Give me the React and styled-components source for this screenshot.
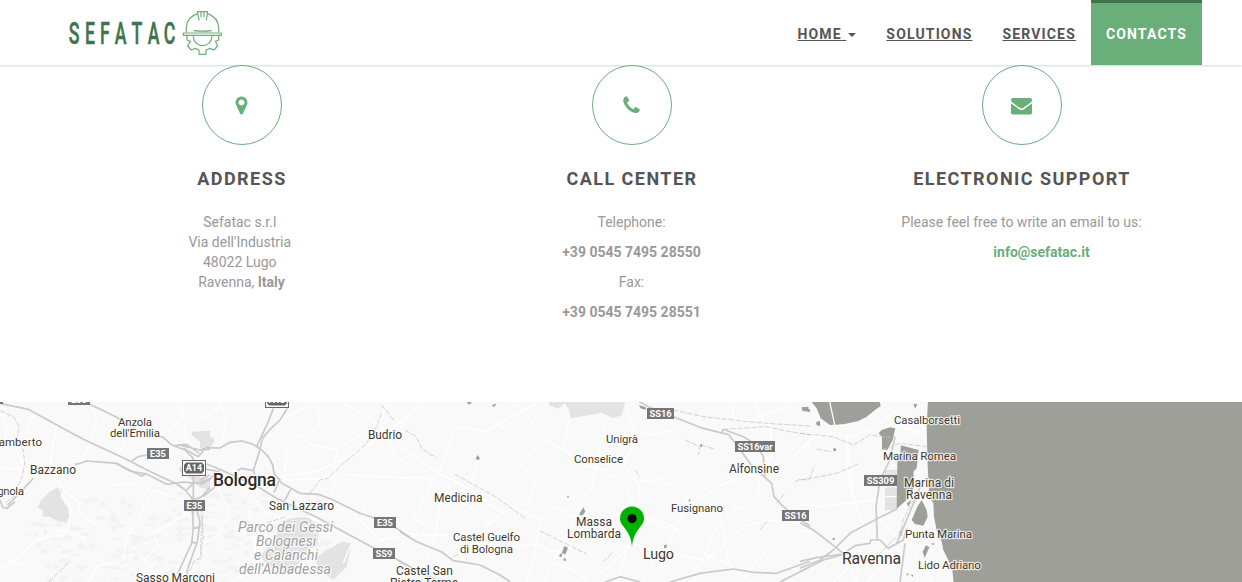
import React from 'react';
import styled, { createGlobalStyle } from 'styled-components';

const GREEN = '#6aae7a';
const DARK_GREEN = '#3f744e';

const GlobalStyle = createGlobalStyle`
  *, *::before, *::after { box-sizing: border-box; }
  body {
    margin: 0;
    background: #fff;
    color: #999;
    font: 14px/20px Roboto, "Liberation Sans", sans-serif;
    overflow: hidden;
  }
`;

const Page = styled.div`
  display: flex;
  flex-direction: column;
  height: 582px;
  overflow: hidden;
`;

const Header = styled.header`
  display: flex;
  justify-content: space-between;
  flex: none;
  height: 65px;
  padding: 0 40px 0 67px;
  background: #fff;
  box-shadow: 0 1px 2px rgba(0, 0, 0, 0.16);
`;

const Brand = styled.a`
  display: block;
  padding-top: 8px;
  svg { display: block; }
`;

const Nav = styled.nav`
  display: flex;
`;

const NavLink = styled.a`
  display: flex;
  align-items: center;
  height: 65px;
  padding: ${(p) => (p.$active ? '0 15px' : '3px 15px 0')};
  border-top: ${(p) => (p.$active ? `3px solid ${DARK_GREEN}` : '0')};
  background: ${(p) => (p.$active ? GREEN : 'transparent')};
  color: ${(p) => (p.$active ? '#fff' : '#555')};
  font-weight: 700;
  letter-spacing: 1.15px;
  text-decoration: ${(p) => (p.$active ? 'none' : 'underline')};
  white-space: pre;
`;

const Caret = styled.span`
  margin: 2px 0 0 2px;
  border: 4px solid transparent;
  border-top-color: #555;
  border-bottom: 0;
`;

const Contacts = styled.section`
  display: grid;
  grid-template-columns: repeat(3, 390px);
  flex: none;
  height: 337px;
  padding-left: 47px;
  text-align: center;
`;

const Card = styled.article`
  display: flex;
  flex-direction: column;
  align-items: center;
`;

const IconRing = styled.div`
  display: flex;
  align-items: center;
  justify-content: center;
  width: 80px;
  height: 80px;
  padding: 1px 1px 0 0;
  border: 1px solid ${GREEN};
  border-radius: 50%;
  background: #fff;
  z-index: 1;
`;

const Title = styled.h4`
  margin: 24px 0 23px;
  color: #555;
  font-size: 18px;
  line-height: 20px;
  font-weight: 700;
  letter-spacing: 1.45px;
`;

const Text = styled.p`
  margin: 0 0 10px;
  padding-right: 1px;
`;

const MailLine = styled.p`
  margin: 0;
  padding-left: 39px;
  color: ${GREEN};
  font-weight: 700;
`;

const MapPanel = styled.section`
  flex: none;
  height: 180px;
  overflow: hidden;
  background: #f9f9f9;
  svg { display: block; }
`;

const ICONS = {
  marker:
    'M1152 640q0-106-75-181t-181-75-181 75-75 181 75 181 181 75 181-75 75-181zm256 0q0 109-33 179l-364 774q-16 33-47.5 52t-67.5 19-67.5-19-46.5-52l-365-774q-33-70-33-179 0-212 150-362t362-150 362 150 150 362z',
  phone:
    'M1600 1240q0 27-10 70.5t-21 68.5q-21 50-122 106-94 51-186 51-27 0-53-3.5t-57.5-12.5-47-14.5-55.5-20.5-49-18q-98-35-175-83-127-79-264-216t-216-264q-48-77-83-175-3-9-18-49t-20.5-55.5-14.5-47-12.5-57.5-3.5-53q0-92 51-186 56-101 106-122 25-11 68.5-21t70.5-10q14 0 21 3 18 6 53 76 11 19 30 54t35 63.5 31 53.5q3 4 17.5 25t21.5 35.5 7 28.5q0 20-28.5 50t-62 55-62 53-28.5 46q0 9 5 22.5t8.5 20.5 14 24 11.5 19q76 137 174 235t235 174q2 1 19 11.5t24 14 20.5 8.5 22.5 5q18 0 46-28.5t53-62 55-62 50-28.5q14 0 28.5 7t35.5 21.5 25 17.5q25 15 53.5 31t63.5 35 54 30q70 35 76 53 3 7 3 21z',
  envelope:
    'M1792 710v794q0 66-47 113t-113 47h-1472q-66 0-113-47t-47-113v-794q44 49 101 87 362 246 497 345 57 42 92.5 65.5t94.5 48 110 24.5h2q51 0 110-24.5t94.5-48 92.5-65.5q170-123 498-345 57-39 100-87zm0-294q0 79-49 151t-122 123q-376 261-468 325-10 7-42.5 31t-54 38-52 29.5-57.5 22.5-50 7.5h-2q-23 0-50-7.5t-57.5-22.5-52-29.5-54-38-42.5-31q-91-64-262-182.5t-205-142.5q-62-42-117-115.5t-55-136.5q0-78 41.5-130t118.5-52h1472q65 0 112.5 47t47.5 113z',
};

function Icon({ name }) {
  return (
    <svg width="21" height="21" viewBox="0 0 1792 1792" fill={GREEN}>
      <path d={ICONS[name]} />
    </svg>
  );
}

function Logo() {
  return (
    <svg width="158" height="50" viewBox="67 8 158 50">
      <g transform="scale(.58 1)">
        <text
          y="44"
          x="127.600 155.200 181 207.800 236.200 264.700 292.200"
          textAnchor="middle"
          fontFamily="Roboto, sans-serif"
          fontSize="30.5"
          fontWeight="500"
          fill={DARK_GREEN}
          stroke={DARK_GREEN}
          strokeWidth=".5"
        >
          SEFATAC
        </text>
      </g>
      <g transform="translate(50 0) scale(.33333)" fill="none" stroke={GREEN} strokeWidth="3.6" strokeLinejoin="round" strokeLinecap="round">
        <path d="M409 95V82C410 62 424 47 443 41M473 41C492 48 505 62 506 82V95M447 60L442 35H473L469 60M453 35V50M462 35V50" />
        <path d="M432 92Q458 95 484 92" />
        <path d="M400 99H514V106H400Z" />
        <path d="M430 110C432 146 483 146 486 110" />
        <path d="M411 109V120L421 124L413 138L424 150L436 145L447 150V163H468V150L480 145L492 150L503 138L496 124L506 120V109" />
      </g>
    </svg>
  );
}

/* Map geometry is stored per tile, three units to a pixel. */
const TILES = [
  {
    x: 0,
    parks: [
      'M112 322L125 300L148 276L180 258L188 270L180 290L204 324L207 350L198 369L170 362L150 350L130 350L128 330Z',
      'M575 95L630 92V150L612 140L600 125L575 105Z',
      'M536 205L560 190L600 230L630 235V270L600 262L570 235L540 215Z',
    ],
    minor: [
      'M0 40L20 80L15 130L45 150L70 190', 'M100 45L75 100L30 140L0 145', 'M170 75L150 190L165 200', 'M270 8L290 60L265 140L240 190',
      'M380 120L345 180M440 120L500 95L550 50L545 8', 'M0 205L95 208M0 500L60 470L110 420L205 400L215 330L180 270L165 200',
      'M0 510L40 485L60 495L75 480', 'M265 546L290 500L370 480L380 410L430 330L425 290L460 250', 'M100 420L130 415L170 390L210 395',
      'M205 395L250 410L260 440M430 320L460 270L545 300', 'M415 546L440 470L475 440L460 400L560 340', 'M180 260L240 310L235 340L300 380',
      'M530 8L555 70L560 140', 'M440 200L400 250L330 255',
    ],
    trunk: [
      'M0 10L85 28L180 80L250 118L390 183L435 207L530 252L556 270L580 300', 'M268 12L350 52L420 95', 'M420 95L490 112L515 135L555 150L580 175V300L578 345',
      'M22 317L100 235M0 300L8 322L22 325L45 305', 'M225 193L240 190L260 183L350 190L390 213L440 222L500 253L550 246L590 250L630 238',
      'M350 192L425 228L437 222', 'M395 183L415 170L440 165', 'M520 137L560 133L598 160M545 137L600 150L630 148M550 145L595 170L612 150', 'M560 270L580 250',
      'M575 290L580 385L575 430L545 495L533 522', 'M590 330L600 365L592 425L565 500L560 520', 'M630 262L605 290L580 300M580 385L598 382M573 425L590 430',
    ],
    rail: ['M0 32L40 50L58 80L50 120L70 150L74 190L68 225L40 290L15 310', 'M148 545L210 483', 'M607 350L602 440L605 475L585 480L560 530'],
  },
  {
    x: 200,
    parks: ['M0 95L20 102L45 120L35 138L0 145Z', 'M255 360L320 345L358 385L350 440L320 450L280 520L210 500L180 470L220 420Z', 'M350 470L400 440L425 425L455 430L440 500L400 540L350 500Z'],
    minor: [
      'M60 8L80 60L65 130', 'M0 60L60 20L75 8', 'M240 60L320 20L330 8', 'M300 110L360 75L350 15', 'M200 95L260 150L255 240L400 235L410 150L500 90L545 60L560 8',
      'M225 230L350 215L480 150L560 100L630 40', 'M400 220L540 230L630 235', 'M430 8L560 90L580 160L630 200', 'M410 150L340 135L260 90', 'M390 290L420 220',
      'M150 270L185 330L240 350L330 350L400 390', 'M110 540L170 490L160 400L145 330', 'M50 260L90 330L60 400L30 420L0 440', 'M240 350L200 400L215 440', 'M430 490L450 440L480 410',
      'M480 300L500 350M460 340L540 420L590 410', 'M620 420L560 460',
    ],
    trunk: [
      'M0 150L20 143L60 144L90 127L125 123L160 133L185 150L205 170L218 195L222 220L245 250L300 280L355 283L400 300L480 340L525 355L590 385L630 412',
      'M220 25L205 65L170 140M262 25L240 60L210 88L188 115L178 155L160 212', 'M20 192L60 208L110 232L170 258L230 295L350 352L520 443L590 478L630 500',
      'M112 212L125 205L160 212L165 225M222 278L240 235M255 300L272 268', 'M0 255L30 238L50 215M10 290L40 265L70 240', 'M0 205L60 215', 'M0 240L30 225',
    ],
    rail: ['M545 40L530 80L500 130L455 170L425 195L385 235L360 240L330 280', 'M545 15L580 60', 'M3 300L10 410L0 470', 'M255 350L200 370'],
  },
  {
    x: 400,
    parks: ['M445 5H630V50L605 38L570 45L512 55L508 30L495 10L475 26L450 18Z'],
    minor: [
      'M0 70L25 60L60 8', 'M0 140L60 180L115 220L180 250L310 340L345 320L420 360L465 320L520 350', 'M100 235L0 232M115 220L165 90L180 80L260 95L300 70L390 20L410 8',
      'M300 70L318 100L240 170L210 250', 'M350 10L440 125L490 150L560 200L630 210', 'M440 125L355 190L410 230L385 310L345 325', 'M510 50L490 150M615 75L585 210L575 260L540 310L510 380L460 490L430 546',
      'M270 370L300 345M150 250L120 320L110 380L95 450L70 500', 'M100 235L55 330L40 355L75 375L70 405L130 405L180 430', 'M0 395L60 408M150 280L270 370L240 400', 'M330 440L410 435L460 455L520 440', 'M460 490L520 510L560 546M420 365L410 435L380 546',
    ],
    trunk: ['M0 395L50 425L125 456L160 482L240 495L300 525L330 545', 'M0 485L70 520L120 546'],
    rail: ['M15 90L48 110L65 145L110 175', 'M165 223L290 292L340 330L378 356', 'M420 393L500 432L560 462', 'M160 470L175 463'],
    buildings: ['M202 5H216L210 13H203Z', 'M275 16L290 10L282 22Z', 'M227 177L232 165L238 172V181Z', 'M537 343L550 322L556 335L546 347Z', 'M485 460L493 438L504 443L497 462Z', 'M477 467L482 460L488 466L482 472Z', 'M490 476L496 474L499 482H491Z', 'M502 288H506V293H502Z'],
  },
  {
    x: 600,
    parks: ['M0 5H75L65 45L40 55L0 35Z'],
    minor: [
      'M80 20L100 95L160 105L220 90M100 95V140L70 190L120 260L115 310L100 390L70 480L55 546', 'M0 210L65 240L100 310', 'M120 240L155 245L165 230L230 265L265 300L310 290L355 260L400 240L450 225L490 230',
      'M470 8L475 45L510 80L520 160L490 230', 'M265 305L220 400L150 500L130 546', 'M115 340L190 380L240 400L310 460L380 490L450 546', 'M310 470L340 400L400 330L470 300L480 230',
      'M490 235L550 200L600 150L630 130', 'M0 520L60 470L100 430L190 455L310 480L250 546', 'M390 500L360 350M320 480L430 380L500 360L590 370', 'M190 455L215 405', 'M150 350L250 395L310 440',
      'M395 15L405 60L460 60L510 40L560 20', 'M435 525L500 450',
    ],
    trunk: ['M118 5L145 20L220 50L300 82L360 98L385 103L410 135L450 190L492 230L515 250L522 290L545 315L580 345L630 378', 'M365 98L370 88L430 110L470 135L490 170L495 230', 'M210 546L300 520L400 507L460 517L530 520L630 484', 'M540 546L630 500', 'M15 546L60 530L120 546'],
    rail: ['M220 30L310 50L400 60L500 70L630 78', 'M370 88L500 80L570 95L630 105', 'M105 210L120 230M255 120L300 140L295 165M305 135L345 148', 'M585 245L600 238L630 240', 'M10 485L40 455M200 430L190 450M480 390L500 365M530 310L555 280'],
    buildings: ['M606 22L630 28V36L608 33Z', 'M301 132H306V140H301Z', 'M192 436L200 434V444H192Z', 'M117 15L137 22V30L122 25Z', 'M266 298H271V304H266Z'],
  },
  {
    x: 800,
    parks: ['M255 210H295V330H255Z'],
    minor: [
      'M0 150L40 110L100 100L150 110L210 90L290 30', 'M140 100V180L150 260L175 340L210 410', 'M140 110L150 200L160 300', 'M0 310L60 320L230 300', 'M100 546L150 500L165 546', 'M0 390L50 400L120 450',
      'M200 546L240 500L300 480M300 70L370 110M290 80L360 95', 'M255 230H295M255 260H290M255 290H290', 'M330 430L350 480L400 546', 'M180 450L170 546M60 8L90 75L130 75', 'M235 360L280 400L300 460',
    ],
    trunk: ['M0 368L40 390L108 442L135 465', 'M285 110L270 180L240 240L228 320L232 420', 'M0 484L50 473L130 462L165 437L210 430L212 420L240 420L265 445L310 420L320 385', 'M0 505L60 480L100 450L150 400L220 362L290 327', 'M290 430L345 300L365 250', 'M0 515L70 480L135 462', 'M315 430L300 546'],
    rail: ['M0 100L100 110L160 135L210 105L270 112', 'M245 150L300 130L380 140', 'M360 260L310 360L300 400L230 470', 'M40 205L30 235M0 240L30 235L110 220L180 190M50 148L95 155'],
    water: [
      'M384 0H1330V550H461L457 510L445 480L430 450L425 425L410 390L402 350L400 310L388 290L383 200L380 80Z',
      'M30 0H238L242 18L225 30L200 50L175 63L130 73L90 75L62 55L50 25Z',
      'M236 100L245 90L270 82L286 85L278 120L262 150L246 148V110Z', 'M302 136L356 150L350 205L340 215L343 260L320 300L290 326L292 180L302 170Z',
      'M365 300L380 330L383 350L370 377L345 372L335 360L352 320Z', 'M297 395L308 390L305 408Z',
    ],
    buildings: ['M5 22L25 20V32H8Z', 'M340 13L352 12L346 26Z', 'M368 455L378 436L388 442L374 474Z', 'M395 430H403V434H395Z', 'M98 414H104V420H98Z', 'M318 522L325 520V527ZM332 523L340 525L338 531Z', 'M100 145H108V153H100Z', 'M48 67L60 62V78L50 76Z', 'M320 310L335 300L325 320Z'],
    causeway: ['M88 0L104 75'],
  },
];

/* x, baseline y, width, size, text, variant */
const LABELS = [
  [118, 426, 34, 11.5, 'Anzola'], [110, 437, 50, 11.5, "dell'Emilia"], [-4, 446, 46, 11.5, 'lamberto'], [30, 474, 46, 12, 'Bazzano'],
  [-12, 495, 36, 11.5, 'Vignola'], [136, 582, 79, 12, 'Sasso Marconi'], [213, 486, 63, 17.5, 'Bologna', 'city'], [269, 510, 65, 12, 'San Lazzaro'],
  [368, 439, 34, 12, 'Budrio'], [434, 502, 48.5, 12, 'Medicina'], [453, 541, 67, 11.5, 'Castel Guelfo'], [460, 553, 53, 11.5, 'di Bologna'],
  [396, 575, 57, 12, 'Castel San'], [390, 587, 68, 12, 'Pietro Terme'], [574, 463, 49, 11.5, 'Conselice'], [606, 443, 32, 11.5, 'Unigrà'],
  [576, 526, 36, 12, 'Massa'], [567, 538, 54, 12, 'Lombarda'], [643, 559, 31, 14.3, 'Lugo'], [671, 512, 52, 11.5, 'Fusignano'],
  [729, 473, 50, 12, 'Alfonsine'], [894, 424, 66, 11.5, 'Casalborsetti'], [883, 460, 73, 11.7, 'Marina Romea'], [904, 487, 50, 12, 'Marina di'],
  [906, 499, 46, 12, 'Ravenna'], [905, 538, 67, 11.7, 'Punta Marina'], [918, 569, 63, 11.7, 'Lido Adriano'], [842, 564, 59, 15.8, 'Ravenna', 'big'],
  [238, 532, 95, 14, 'Parco dei Gessi', 'park'], [256, 546, 60, 14, 'Bolognesi', 'park'], [254, 560, 64, 14, 'e Calanchi', 'park'], [239, 574, 92, 14, "dell'Abbadessa", 'park'],
];

const SHIELDS = [
  [147, 448, 22, 'E35'], [184, 500, 21, 'E35'], [374, 517, 22, 'E35'], [373, 548, 22, 'SS9'], [647, 408, 27, 'SS16'],
  [735, 441, 40, 'SS16var'], [782, 510, 27, 'SS16'], [864, 475, 33, 'SS309'], [68, 394, 22, 'E35'], [-15, 393, 18, 'A1'],
];

function terrain() {
  const shapes = [];
  let seed = 11;
  const next = () => {
    seed = (seed * 16807) % 2147483647;
    return seed / 2147483647;
  };
  for (let i = 0; i < 230; i += 1) {
    const x = 25 + next() * 300;
    const y = 493 + next() * 92;
    if (y < 515 && x < 75) continue;
    const w = 3 + next() * 10;
    const h = 0.8 + next() * 2.4;
    shapes.push(`M${x} ${y}l${w * 0.5} ${-h}l${w * 0.3} ${h * 0.8}l${w * 0.4} ${h * 0.4}l${-w * 0.6} ${h}l${-w * 0.5} ${-h * 0.3}z`);
  }
  return shapes.join('');
}

const TERRAIN = terrain();

const LABEL_STYLES = {
  town: { fill: '#3d382b', weight: 400 },
  big: { fill: '#3d382b', weight: 400 },
  city: { fill: '#2f2a1d', weight: 500 },
  park: { fill: '#a0a0a0', weight: 400, italic: true },
};

function MapLabel({ item: [x, y, width, size, text, kind = 'town'] }) {
  const look = LABEL_STYLES[kind];
  return (
    <text
      x={x}
      y={y}
      textLength={width}
      fontSize={size}
      fontWeight={look.weight}
      fontStyle={look.italic ? 'italic' : 'normal'}
      fill={look.fill}
      stroke="#fff"
      strokeOpacity=".75"
      strokeWidth="2.4"
      strokeLinejoin="round"
      paintOrder="stroke"
    >
      {text}
    </text>
  );
}

function Shield({ item: [x, y, width, text] }) {
  return (
    <g>
      <rect x={x} y={y} width={width} height="11" fill="#767676" />
      <text x={x + width / 2} y={y + 8.8} textAnchor="middle" fontSize="9.300" fontWeight="700" fill="#fff">
        {text}
      </text>
    </g>
  );
}

function MotorwayShield({ x, y, text }) {
  return (
    <g>
      <rect x={x + 0.5} y={y + 0.5} width="23" height="15" fill="#fff" stroke="#666" />
      <path d={`M${x + 4} ${y + 2.5}H${x + 20}L${x + 22} ${y + 5}V${y + 11}L${x + 20} ${y + 13.5}H${x + 4}L${x + 2} ${y + 11}V${y + 5}Z`} fill="#666" />
      <text x={x + 12} y={y + 11.2} textAnchor="middle" fontSize="9" fontWeight="700" fill="#fff">
        {text}
      </text>
    </g>
  );
}

function AreaMap() {
  const layer = (key, props) =>
    TILES.map((tile) => (
      <g key={tile.x} transform={`translate(${tile.x} 400) scale(.33333)`} {...props}>
        {(tile[key] || []).map((d) => (
          <path key={d} d={d} />
        ))}
      </g>
    ));
  return (
    <svg width="1242" height="180" viewBox="0 402 1242 180" fontFamily="Roboto, sans-serif">
      <rect x="0" y="402" width="1242" height="180" fill="#f9f9f9" />
      <path d={TERRAIN} fill="#f3f3f3" />
      {layer('parks', { fill: '#e3e3e3' })}
      {layer('minor', { fill: 'none', stroke: '#fff', strokeWidth: 4, strokeLinejoin: 'round' })}
      {layer('water', { fill: '#9e9f99' })}
      {layer('causeway', { fill: 'none', stroke: '#f9f9f9', strokeWidth: 4 })}
      {layer('rail', { fill: 'none', stroke: '#c4c4c4', strokeWidth: 2.2, strokeDasharray: '16 5' })}
      {layer('trunk', { fill: 'none', stroke: '#cacaca', strokeWidth: 5, strokeLinejoin: 'round' })}
      {layer('buildings', { fill: '#9e9f99' })}
      {SHIELDS.map((item) => (
        <Shield key={`${item[0]}-${item[1]}`} item={item} />
      ))}
      <MotorwayShield x={182} y={460} text="A14" />
      <MotorwayShield x={265} y={392} text="A13" />
      {LABELS.map((item) => (
        <MapLabel key={`${item[0]}-${item[1]}`} item={item} />
      ))}
      <path d="M632 547C631 536 628 533 624 527C621.500 524 620 522 620 518.500A12 12 0 0 1 644 518.500C644 522 642.500 524 640 527C636 533 633 536 632 547Z" fill="#00b200" />
      <circle cx="632" cy="518.500" r="4.600" fill="#000" />
    </svg>
  );
}

export default function App() {
  return (
    <Page>
      <GlobalStyle />
      <Header>
        <Brand>
          <Logo />
        </Brand>
        <Nav>
          <NavLink>
            {'HOME '}
            <Caret />
          </NavLink>
          <NavLink>SOLUTIONS</NavLink>
          <NavLink>SERVICES</NavLink>
          <NavLink $active>CONTACTS</NavLink>
        </Nav>
      </Header>
      <Contacts>
        <Card>
          <IconRing>
            <Icon name="marker" />
          </IconRing>
          <Title>ADDRESS</Title>
          <Text>
            Sefatac s.r.l{'\u00a0'}
            <br />
            Via dell'Industria{'\u00a0'}
            <br />
            48022 Lugo{'\u00a0'}
            <br />
            Ravenna, <strong>Italy</strong>
          </Text>
        </Card>
        <Card>
          <IconRing>
            <Icon name="phone" />
          </IconRing>
          <Title>CALL CENTER</Title>
          <Text>Telephone:</Text>
          <Text>
            <strong>+39 0545 7495 28550</strong>
          </Text>
          <Text>Fax:</Text>
          <Text>
            <strong>+39 0545 7495 28551</strong>
          </Text>
        </Card>
        <Card>
          <IconRing>
            <Icon name="envelope" />
          </IconRing>
          <Title>ELECTRONIC SUPPORT</Title>
          <Text>Please feel free to write an email to us:</Text>
          <MailLine>info@sefatac.it</MailLine>
        </Card>
      </Contacts>
      <MapPanel>
        <AreaMap />
      </MapPanel>
    </Page>
  );
}
